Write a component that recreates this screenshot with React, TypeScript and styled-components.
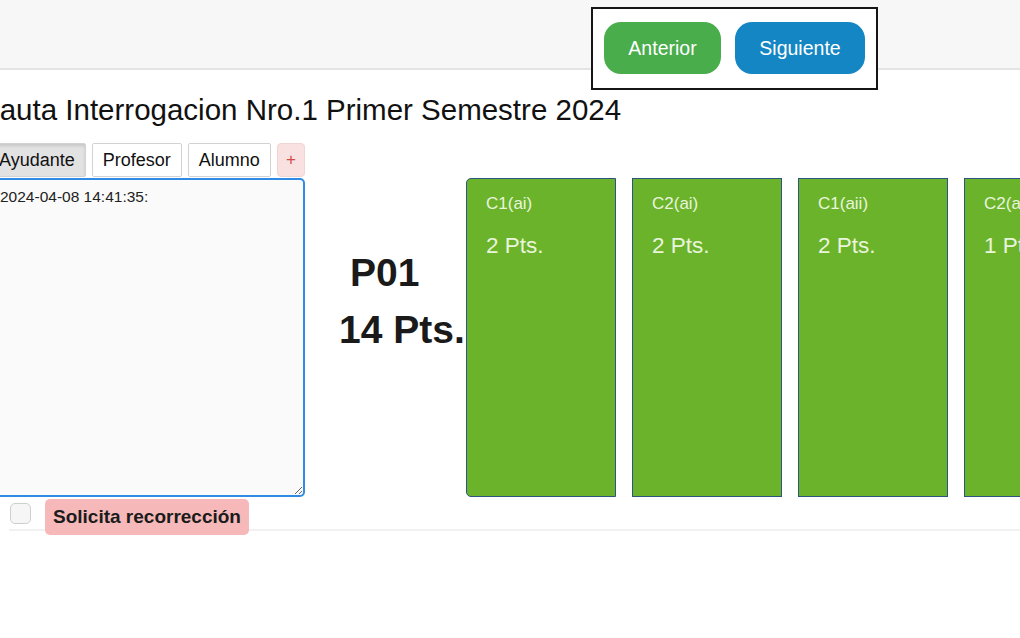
import React from 'react';
import styled, { createGlobalStyle } from 'styled-components';

const GlobalStyle = createGlobalStyle`
  html, body {
    margin: 0;
    padding: 0;
    background: #ffffff;
    overflow: hidden;
    font-family: "Liberation Sans", Arial, sans-serif;
  }
`;

const Page = styled.div`
  width: 1020px;
  height: 638px;
  overflow: hidden;
`;

const Header = styled.header`
  height: 68px;
  background: #f7f7f7;
  border-bottom: 2px solid #e4e4e4;
  display: flex;
  justify-content: flex-end;
  align-items: flex-start;
  padding-right: 142px;
`;

const NavBox = styled.div`
  box-sizing: border-box;
  margin-top: 7px;
  height: 83px;
  border: 2px solid #151515;
  background: #ffffff;
  display: flex;
  align-items: flex-start;
  gap: 14px;
  padding: 13px 11px 0 11px;
  position: relative;
  z-index: 2;
`;

const NavButton = styled.button<{ $color: string; $width: number }>`
  width: ${({ $width }) => $width}px;
  height: 52px;
  border: none;
  border-radius: 17px;
  background: ${({ $color }) => $color};
  color: #ffffff;
  font-family: "Liberation Sans", Arial, sans-serif;
  font-size: 19.5px;
  cursor: pointer;
`;

const Content = styled.main`
  margin-left: -15px;
`;

const Title = styled.h1`
  margin: 21px 0 0 -5px;
  font-size: 29.5px;
  line-height: 38px;
  font-weight: normal;
  color: #111;
  white-space: nowrap;
`;

const Workspace = styled.div`
  margin-top: 14px;
  display: flex;
  align-items: flex-start;
`;

const NotesColumn = styled.div`
  width: 320px;
  flex: none;
  display: flex;
  flex-direction: column;
`;

const Tabs = styled.div`
  display: flex;
  gap: 6px;
  height: 35px;
  margin-left: 3px;
`;

const Tab = styled.button<{ $active?: boolean }>`
  height: 34px;
  padding: 0 10px;
  border: 1px solid #d2d2d2;
  border-radius: 2px;
  background: ${({ $active }) => ($active ? '#e2e2e2' : '#ffffff')};
  box-shadow: ${({ $active }) => ($active ? 'inset 0 2px 3px rgba(0,0,0,0.12)' : 'none')};
  color: #111;
  font-family: "Liberation Sans", Arial, sans-serif;
  font-size: 18px;
`;

const AddTab = styled(Tab)`
  width: 30px;
  padding: 0;
  border-color: #f1d4d4;
  background: #f9e1e1;
  color: #d24a4a;
  border-radius: 4px;
  font-size: 17px;
`;

const Notes = styled.textarea`
  box-sizing: border-box;
  width: 320px;
  height: 319px;
  border: 2px solid #2f8be3;
  border-radius: 5px;
  background: #fafafa;
  padding: 8px 13px;
  font-family: "Liberation Sans", Arial, sans-serif;
  font-size: 15.5px;
  color: #222;
  outline: none;
`;

const ScoreColumn = styled.div`
  width: 161px;
  flex: none;
  padding-top: 101px;
  display: flex;
  flex-direction: column;
`;

const ScoreLine = styled.div<{ $indent: number }>`
  padding-left: ${({ $indent }) => $indent}px;
  font-size: 39px;
  line-height: 57px;
  font-weight: bold;
  color: #1a1a1a;
  white-space: nowrap;
`;

const Cards = styled.div`
  margin-top: 35px;
  display: flex;
  gap: 16px;
`;

const Card = styled.div<{ $first?: boolean }>`
  box-sizing: border-box;
  width: 150px;
  height: 319px;
  flex: none;
  background: #6bb32b;
  border: 1px solid #2b5580;
  border-radius: ${({ $first }) => ($first ? '5px 0 0 5px' : '0')};
  padding: 14px 19px;
  color: #e9f5dc;
`;

const CardLabel = styled.div`
  font-size: 17px;
  line-height: 22px;
`;

const CardPoints = styled.div`
  margin-top: 18px;
  font-size: 22.5px;
  line-height: 26px;
`;

const Footer = styled.div`
  margin-left: 24px;
  height: 32px;
  border-bottom: 2px solid #f1f1f1;
  display: flex;
  align-items: flex-start;
  gap: 14px;
`;

const Check = styled.input`
  appearance: none;
  margin: 6px 0 0 1px;
  width: 21px;
  height: 21px;
  border: 1px solid #cfcfcf;
  border-radius: 5px;
  background: #f6f6f6;
`;

const Badge = styled.span`
  margin-top: 2px;
  height: 36px;
  padding: 0 8px;
  display: flex;
  align-items: center;
  border-radius: 5px;
  background: #f6b8b8;
  color: #1b1b1b;
  font-size: 19px;
  font-weight: bold;
  position: relative;
  z-index: 1;
`;

const cards = [
  { label: 'C1(ai)', points: '2 Pts.' },
  { label: 'C2(ai)', points: '2 Pts.' },
  { label: 'C1(aii)', points: '2 Pts.' },
  { label: 'C2(aii)', points: '1 Pts.' },
];

const App: React.FC = () => {
  return (
    <Page>
      <GlobalStyle />
      <Header>
        <NavBox>
          <NavButton $color="#49ad4b" $width={117}>Anterior</NavButton>
          <NavButton $color="#1586c4" $width={130}>Siguiente</NavButton>
        </NavBox>
      </Header>
      <Content>
        <Title>Pauta Interrogacion Nro.1 Primer Semestre 2024</Title>
        <Workspace>
          <NotesColumn>
            <Tabs>
              <Tab $active>Ayudante</Tab>
              <Tab>Profesor</Tab>
              <Tab>Alumno</Tab>
              <AddTab>+</AddTab>
            </Tabs>
            <Notes defaultValue="2024-04-08 14:41:35:" />
          </NotesColumn>
          <ScoreColumn>
            <ScoreLine $indent={45}>P01</ScoreLine>
            <ScoreLine $indent={34}>14 Pts.</ScoreLine>
          </ScoreColumn>
          <Cards>
            {cards.map((c, i) => (
              <Card key={c.label} $first={i === 0}>
                <CardLabel>{c.label}</CardLabel>
                <CardPoints>{c.points}</CardPoints>
              </Card>
            ))}
          </Cards>
        </Workspace>
        <Footer>
          <Check type="checkbox" />
          <Badge>Solicita recorrección</Badge>
        </Footer>
      </Content>
    </Page>
  );
};

export default App;
